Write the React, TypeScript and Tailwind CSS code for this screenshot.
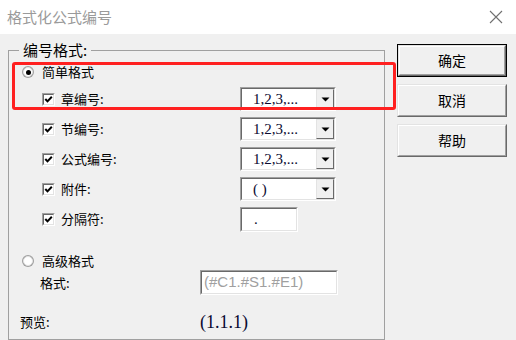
import React from "react";

const ROWS = [
  { label: "章编号:", value: "1,2,3,..." },
  { label: "节编号:", value: "1,2,3,..." },
  { label: "公式编号:", value: "1,2,3,..." },
  { label: "附件:", value: "( )" },
];

function CheckBox() {
  return (
    <div className="w-[13px] h-[13px] border border-t-[#a0a0a0] border-l-[#a0a0a0] border-r-white border-b-white">
      <div className="w-full h-full bg-white border border-t-[#696969] border-l-[#696969] border-r-[#e3e3e3] border-b-[#e3e3e3] flex items-center justify-center">
        <svg width="9" height="9" viewBox="0 0 9 9">
          <path d="M1.3 4 L3.5 6.4 L7.8 1.8" stroke="#000" strokeWidth="2" fill="none" />
        </svg>
      </div>
    </div>
  );
}

function Radio({ on }: { on?: boolean }) {
  return (
    <div className="w-[12px] h-[12px] rounded-full bg-[#a0a0a0] p-px">
      <div className="w-full h-full rounded-full bg-white border border-[#e3e3e3] flex items-center justify-center">
        {on && <div className="w-[5px] h-[5px] rounded-full bg-black" />}
      </div>
    </div>
  );
}

function Sunken({ className, children }: { className: string; children?: React.ReactNode }) {
  return (
    <div className={`border border-t-[#a0a0a0] border-l-[#a0a0a0] border-r-white border-b-white ${className}`}>
      <div className="w-full h-full bg-white border border-t-[#696969] border-l-[#696969] border-r-[#e3e3e3] border-b-[#e3e3e3] flex items-center">
        {children}
      </div>
    </div>
  );
}

function Combo({ value }: { value: string }) {
  return (
    <Sunken className="w-[96px] h-[24px]">
      <span className="flex-1 pl-[11px] text-[15px] leading-none font-['Liberation_Serif',serif] text-[#0a0a30]">
        {value}
      </span>
      <div className="w-[18px] h-full bg-[#f0f0f0] border border-t-[#e3e3e3] border-l-[#e3e3e3] border-r-[#696969] border-b-[#696969] flex items-center justify-center">
        <svg width="9" height="5" viewBox="0 0 9 5">
          <path d="M0.5 0.5 L8.5 0.5 L4.5 4.5 Z" fill="#000" />
        </svg>
      </div>
    </Sunken>
  );
}

function DlgButton({ label, isDefault }: { label: string; isDefault?: boolean }) {
  const inner = (
    <div className="w-full h-full border border-t-white border-l-white border-r-[#a0a0a0] border-b-[#a0a0a0] flex items-center justify-center text-[14px] text-black">
      {label}
    </div>
  );
  if (isDefault) {
    return (
      <div className="w-[110px] h-[33px] border border-black bg-[#f0f0f0]">
        <div className="w-full h-full border border-t-[#e3e3e3] border-l-[#e3e3e3] border-r-[#696969] border-b-[#696969]">
          {inner}
        </div>
      </div>
    );
  }
  return (
    <div className="w-[110px] h-[33px] bg-[#f0f0f0] border border-t-[#e3e3e3] border-l-[#e3e3e3] border-r-[#696969] border-b-[#696969]">
      {inner}
    </div>
  );
}

export default function App() {
  return (
    <div className="relative w-[516px] h-[340px] overflow-hidden bg-[#f0f0f0] font-['Noto_Sans_CJK_SC',sans-serif] text-[13px] text-black">
      {/* title bar */}
      <div className="h-[34px] bg-white flex items-center justify-between pl-[7px] pr-[13px]">
        <span className="text-[15px] text-[#9a9a9a]">格式化公式编号</span>
        <svg width="14" height="14" viewBox="0 0 14 14">
          <path d="M1 1 L13 13 M13 1 L1 13" stroke="#707070" strokeWidth="1.1" />
        </svg>
      </div>

      <div className="flex">
        <fieldset className="ml-[8px] mt-[6px] w-[377px] h-[300px] border border-[#a0a0a0]">
          <legend className="ml-[10px] px-[4px] text-[15px] leading-[20px]">编号格式:</legend>

          <div className="h-[24px] flex items-center pl-[13px] gap-[8px]">
            <Radio on />
            <span>简单格式</span>
          </div>

          {ROWS.map((r) => (
            <div key={r.label} className="h-[30px] flex items-center pl-[33px]">
              <CheckBox />
              <span className="ml-[6px] w-[179px]">{r.label}</span>
              <Combo value={r.value} />
            </div>
          ))}
          <div className="h-[30px] flex items-center pl-[33px]">
            <CheckBox />
            <span className="ml-[6px] w-[179px]">分隔符:</span>
            <Sunken className="w-[58px] h-[25px]">
              <span className="pl-[12px] text-[15px] font-['Liberation_Serif',serif] text-[#0a0a30]">.</span>
            </Sunken>
          </div>

          <div className="mt-[18px] h-[18px] flex items-center pl-[13px] gap-[8px]">
            <Radio />
            <span>高级格式</span>
          </div>
          <div className="h-[25px] flex items-center pl-[31px]">
            <span className="w-[160px]">格式:</span>
            <div className="w-[138px] h-[25px] border border-t-[#a0a0a0] border-l-[#a0a0a0] border-r-white border-b-white">
              <div className="w-full h-full bg-white border border-t-[#696969] border-l-[#696969] border-r-[#e3e3e3] border-b-[#e3e3e3] flex items-center pl-[2px] text-[15px] font-['Liberation_Sans',sans-serif] text-[#a0a0a0]">
                (#C1.#S1.#E1)
              </div>
            </div>
          </div>

          <div className="mt-[15px] h-[24px] flex items-center pl-[11px]">
            <span className="w-[180px]">预览:</span>
            <span className="text-[18px] font-['Liberation_Serif',serif] text-[#0a0a30]">(1.1.1)</span>
          </div>
        </fieldset>

        <div className="ml-[12px] mt-[10px] flex flex-col gap-[7px]">
          <DlgButton label="确定" isDefault />
          <DlgButton label="取消" />
          <DlgButton label="帮助" />
        </div>
      </div>

      {/* red annotation box */}
      <div className="absolute left-[12px] top-[62px] w-[384px] h-[48px] border-[3px] border-[#ff2020] rounded-[3px] pointer-events-none" />
    </div>
  );
}
